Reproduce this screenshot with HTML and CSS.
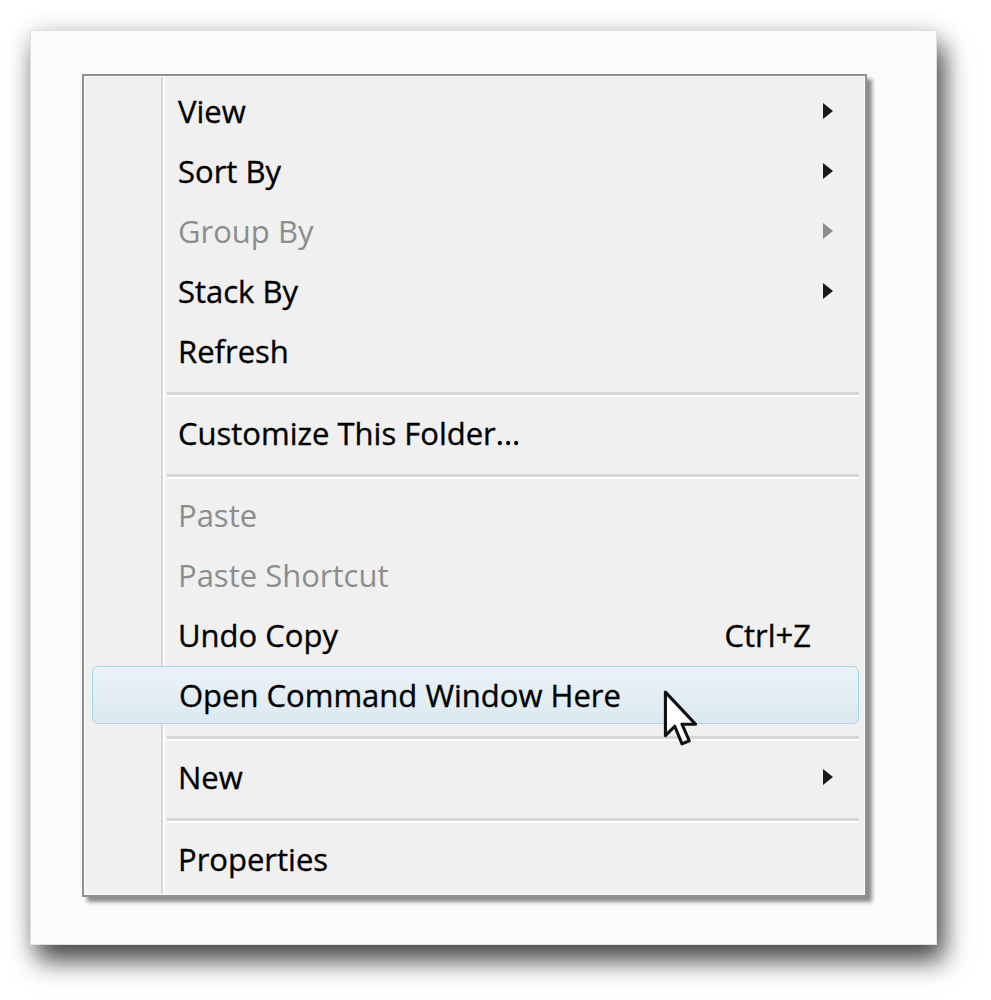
FILE: index.html
```html
<!DOCTYPE html>
<html>
<head>
	<meta charset="UTF-8">
	<title>Context menu</title>
	<link rel="stylesheet" href="styles.css">
</head>
<body>
<div id="frame">
    <div id="menu">
        <ul class="list">
            <li class="item"><span>View</span><i class="arrow"></i></li>
            <li class="item"><span>Sort By</span><i class="arrow"></i></li>
            <li class="item off"><span>Group By</span><i class="arrow"></i></li>
            <li class="item"><span>Stack By</span><i class="arrow"></i></li>
            <li class="item"><span>Refresh</span></li>
            <li class="sep"></li>
            <li class="item"><span>Customize This Folder...</span></li>
            <li class="sep"></li>
            <li class="item off"><span>Paste</span></li>
            <li class="item off"><span>Paste Shortcut</span></li>
            <li class="item"><span>Undo Copy</span><em class="key">Ctrl+Z</em></li>
            <li class="item hover"><span>Open Command Window Here</span>
                <svg class="cursor" width="38" height="58" viewBox="0 0 36 56">
                    <path d="M2 2 L2 44 L11 35 L18 52 L25 49 L18 33 L31 33 Z" fill="#fff" stroke="#111" stroke-width="3" stroke-linejoin="round"/>
                </svg>
            </li>
            <li class="sep"></li>
            <li class="item"><span>New</span><i class="arrow"></i></li>
            <li class="sep"></li>
            <li class="item"><span>Properties</span></li>
        </ul>
    </div>
</div>
</body>
</html>
```
FILE: styles.css
```css
html,body{
    margin: 0;
    padding: 0;
}
body{
    min-height: 1000px;
    background-color: #fff;
    font-family: "Open Sans", "Noto Sans", sans-serif;
    overflow: hidden;
}
#frame{
    width: 907px;
    height: 915px;
    margin: 30px 0 0 30px;
    background-color: #fcfcfc;
    border: 1px solid #e0e0e0;
    box-shadow: 7px 16px 24px rgba(0,0,0,0.7), 0 0 22px rgba(0,0,0,0.12);
    padding: 43px 0 0 51px;
    box-sizing: border-box;
}
#menu{
    width: 785px;
    height: 823px;
    border: 2px solid #8f8f8f;
    background-color: #f0f0f0;
    box-shadow: inset 0 0 0 1px #fcfcfc, 5px 5px 4px rgba(0,0,0,0.45);
    padding: 5px 6px 5px 6px;
    box-sizing: border-box;
    background-image: linear-gradient(to right, transparent 77px, #d6d6d6 77px, #d6d6d6 79px, #fff 79px, #fff 81px, transparent 81px);
}
.list{
    margin: 0;
    padding: 0;
    list-style: none;
}
.item{
    position: relative;
    height: 60px;
    display: flex;
    align-items: center;
    padding: 0 26px 0 88px;
    font-size: 31px;
    color: #000;
    -webkit-text-stroke: 0.35px #000;
}
.item span{
    flex: 1;
}
.off{
    color: #8d8d8d;
    -webkit-text-stroke: 0;
}
.arrow{
    width: 0;
    height: 0;
    border-top: 8px solid transparent;
    border-bottom: 8px solid transparent;
    border-left: 10px solid #1a1a1a;
}
.off .arrow{
    border-left-color: #8d8d8d;
}
.key{
    font-style: normal;
    margin-right: 22px;
}
.hover{
    margin: 1px 0 1px 2px;
    padding-left: 86px;
    height: 58px;
    border: 1px solid #a6d6ec;
    border-radius: 6px;
    background-image: linear-gradient(to bottom, #eaf2f7, #dce9f1);
    box-sizing: border-box;
}
.cursor{
    position: absolute;
    left: 570px;
    top: 23px;
}
.sep{
    height: 22px;
    margin-left: 77px;
    background-image: linear-gradient(to bottom, transparent 11px, #d6d6d6 11px, #d6d6d6 14px, #fff 14px, #fff 16px, transparent 16px);
}
```
